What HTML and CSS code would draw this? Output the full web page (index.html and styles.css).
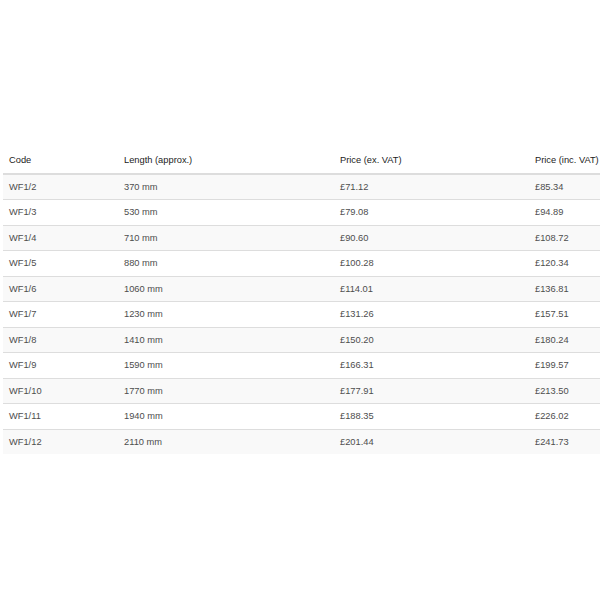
FILE: index.html
```html
<!DOCTYPE html>
<html>
<head>
<meta charset="utf-8">
<link rel="stylesheet" href="styles.css">
</head>
<body>
<table class="prices">
  <colgroup>
    <col class="c1"><col class="c2"><col class="c3"><col class="c4">
  </colgroup>
  <thead>
    <tr><th>Code</th><th>Length (approx.)</th><th>Price (ex. VAT)</th><th>Price (inc. VAT)</th></tr>
  </thead>
  <tbody>
    <tr><td>WF1/2</td><td>370 mm</td><td>£71.12</td><td>£85.34</td></tr>
    <tr><td>WF1/3</td><td>530 mm</td><td>£79.08</td><td>£94.89</td></tr>
    <tr><td>WF1/4</td><td>710 mm</td><td>£90.60</td><td>£108.72</td></tr>
    <tr><td>WF1/5</td><td>880 mm</td><td>£100.28</td><td>£120.34</td></tr>
    <tr><td>WF1/6</td><td>1060 mm</td><td>£114.01</td><td>£136.81</td></tr>
    <tr><td>WF1/7</td><td>1230 mm</td><td>£131.26</td><td>£157.51</td></tr>
    <tr><td>WF1/8</td><td>1410 mm</td><td>£150.20</td><td>£180.24</td></tr>
    <tr><td>WF1/9</td><td>1590 mm</td><td>£166.31</td><td>£199.57</td></tr>
    <tr><td>WF1/10</td><td>1770 mm</td><td>£177.91</td><td>£213.50</td></tr>
    <tr><td>WF1/11</td><td>1940 mm</td><td>£188.35</td><td>£226.02</td></tr>
    <tr><td>WF1/12</td><td>2110 mm</td><td>£201.44</td><td>£241.73</td></tr>
  </tbody>
</table>
</body>
</html>
```
FILE: styles.css
```css
html, body {
  margin: 0;
  padding: 0;
  background: #fff;
  overflow: hidden;
}
body {
  font-family: "Liberation Sans", Arial, sans-serif;
  font-size: 9.3px;
  color: #4d4d4d;
}
.prices {
  margin: 148px 0 0 3px;
  border-collapse: collapse;
  table-layout: fixed;
  width: 600px;
}
.c1 { width: 115px; }
.c2 { width: 216px; }
.c3 { width: 195px; }
.c4 { width: 74px; }
.prices th, .prices td {
  padding: 5px 6px;
  line-height: 14.5px;
  text-align: left;
  white-space: nowrap;
  vertical-align: middle;
}
.prices th {
  font-weight: normal;
  color: #222;
  border-bottom: 2px solid #ddd;
}
.prices td {
  border-top: 1px solid #ddd;
}
.prices tbody tr:first-child td {
  border-top: 0;
}
.prices tbody tr:nth-child(odd) {
  background: #f9f9f9;
}
```
